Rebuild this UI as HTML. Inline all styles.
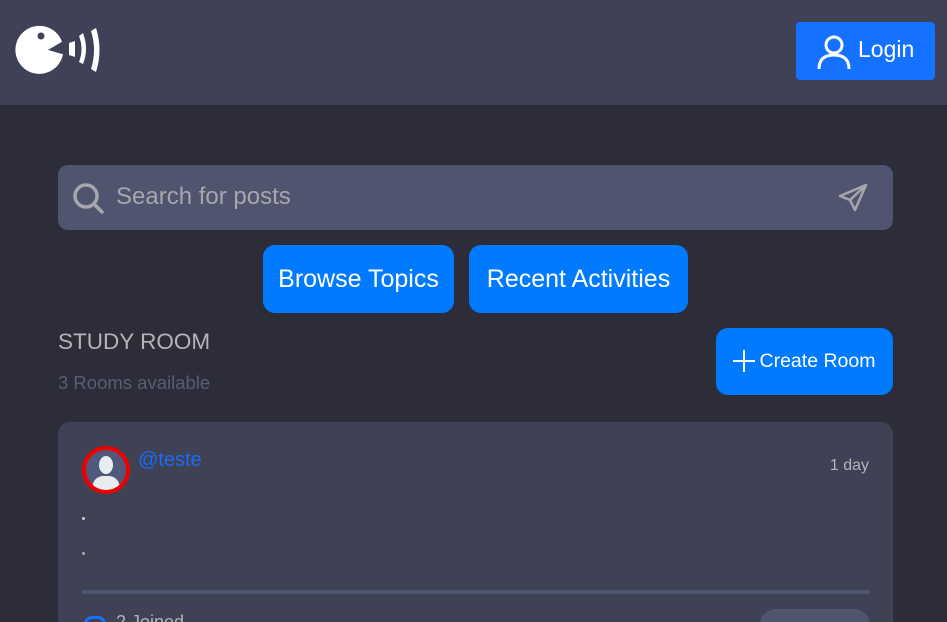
<!DOCTYPE html>
<html><head><meta charset="utf-8"><style>
*{margin:0;padding:0;box-sizing:border-box}
html,body{width:947px;height:622px;overflow:hidden}
body{background:#2d2d3a;font-family:"Liberation Sans",sans-serif;position:relative}
.hdr{position:absolute;left:0;top:0;width:947px;height:105px;background:#3f4156}
.login{position:absolute;left:796px;top:22px;width:139px;height:58px;background:#1571ff;border-radius:4px;color:#fff;font-size:23px}
.login span{position:absolute;left:62px;top:14px}
.search{position:absolute;left:58px;top:165px;width:835px;height:65px;background:#51546e;border-radius:10px}
.search span{position:absolute;left:58px;top:18px;color:#a6a6ac;font-size:24px}
.btn{position:absolute;background:#007aff;color:#fff;border-radius:12px;font-size:25px;text-align:center}
.t1{position:absolute;left:58px;top:329px;color:#b3b3b8;font-size:22.5px}
.t2{position:absolute;left:58px;top:372px;color:#5a5c74;font-size:18.5px}
.card{position:absolute;left:58px;top:422px;width:835px;height:200px;background:#3f4155;border-radius:12px 12px 0 0;overflow:hidden}
</style></head><body>
<div class="hdr">
<svg style="position:absolute;left:0;top:0" width="110" height="100" viewBox="0 0 110 100">
<path d="M48 50 L62 41.8 A24 24 0 1 0 63 54.2 Z" fill="#fff"/>
<circle cx="41" cy="36" r="3.5" fill="#3f4156"/>
<path d="M69 43 L75 41 L75 57 L69 55 Z" fill="#fff"/>
<path d="M79 36 Q84 49 79 62 L83 64 Q89 49 83 33Z" fill="#fff"/>
<path d="M91 31 Q97 50 91 69 L96 72 Q103 50 96 28Z" fill="#fff"/>
</svg>
<div class="login"><svg style="position:absolute;left:20px;top:12px" width="36" height="36" viewBox="0 0 36 36" fill="none" stroke="#fff" stroke-width="3"><circle cx="18" cy="11" r="8"/><path d="M3 35 Q3 21 18 21 Q33 21 33 35"/></svg><span>Login</span></div>
</div>
<div class="search">
<svg style="position:absolute;left:14px;top:17px" width="34" height="32" viewBox="0 0 34 32" fill="none" stroke="#a6a6ac" stroke-width="3.5"><circle cx="14" cy="14" r="11"/><path d="M22 22 L30 30" stroke-linecap="round"/></svg>
<span>Search for posts</span>
<svg style="position:absolute;left:779px;top:17px" width="32" height="32" viewBox="0 0 32 32" fill="none" stroke="#a6a6ac" stroke-width="2.5" stroke-linejoin="round"><path d="M29 3 L3 14 L13 18 L18 28 Z M29 3 L13 18"/></svg>
</div>
<div class="btn" style="left:263px;top:245px;width:191px;height:68px;line-height:68px">Browse Topics</div>
<div class="btn" style="left:469px;top:245px;width:219px;height:68px;line-height:68px">Recent Activities</div>
<div class="t1">STUDY ROOM</div>
<div class="t2">3 Rooms available</div>
<div class="btn" style="left:716px;top:328px;width:177px;height:67px;font-size:19.5px;line-height:67px;padding-left:26px">Create Room
<svg style="position:absolute;left:16px;top:21px" width="24" height="24" viewBox="0 0 24 24" stroke="#fff" stroke-width="2"><path d="M12 1V23M1 12H23"/></svg></div>
<div class="card">
<div style="position:absolute;left:24px;top:24px;width:48px;height:48px;border-radius:50%;border:4px solid #e00;background:#51597a;overflow:hidden">
<svg width="40" height="40" viewBox="0 0 40 40"><ellipse cx="20" cy="15" rx="7" ry="9" fill="#e8ecef"/><path d="M6 40 Q6 28 16 26 L24 26 Q34 28 34 40Z" fill="#e8ecef"/></svg></div>
<div style="position:absolute;left:80px;top:27px;color:#1c6bf0;font-size:20px">@teste</div>
<div style="position:absolute;right:24px;top:35px;color:#b3b3b8;font-size:16px">1 day</div>
<div style="position:absolute;left:24px;top:95px;width:3px;height:3px;background:#ccc;border-radius:50%"></div>
<div style="position:absolute;left:24px;top:130px;width:3px;height:3px;background:#aaa;border-radius:50%"></div>
<div style="position:absolute;left:24px;top:168px;width:787px;height:4px;background:#51546e"></div>
<div style="position:absolute;left:702px;top:187px;width:110px;height:40px;background:#51546e;border-radius:16px"></div>
<div style="position:absolute;left:26px;top:194px;width:22px;height:14px;border:3px solid #1571ff;border-radius:8px 8px 0 0;border-bottom:none"></div>
<div style="position:absolute;left:58px;top:190px;color:#b3b3b8;font-size:18px">2 Joined</div>
</div>
</body></html>
